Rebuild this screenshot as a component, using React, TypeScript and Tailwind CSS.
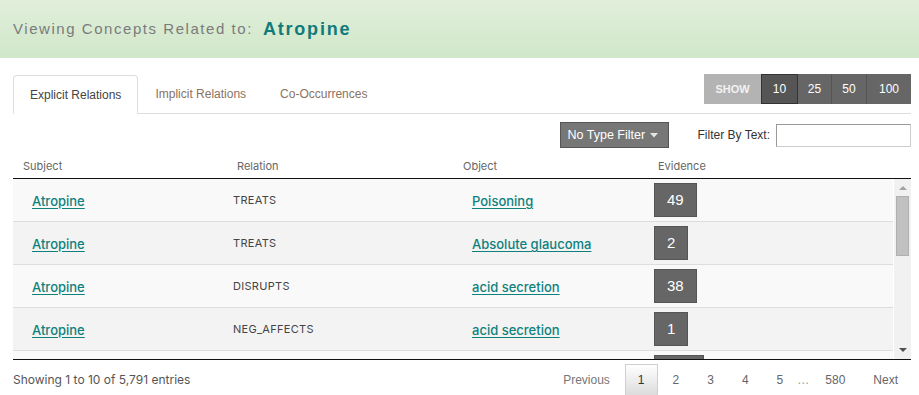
import React from 'react';

interface Relation {
  subject: string;
  relation: string;
  object: string;
  evidence: number;
}

const rows: Relation[] = [
  { subject: 'Atropine', relation: 'TREATS', object: 'Poisoning', evidence: 49 },
  { subject: 'Atropine', relation: 'TREATS', object: 'Absolute glaucoma', evidence: 2 },
  { subject: 'Atropine', relation: 'DISRUPTS', object: 'acid secretion', evidence: 38 },
  { subject: 'Atropine', relation: 'NEG_AFFECTS', object: 'acid secretion', evidence: 1 },
  { subject: 'Atropine', relation: 'INHIBITS', object: 'Acetylcholine', evidence: 112 },
  { subject: 'Atropine', relation: 'TREATS', object: 'Bradycardia', evidence: 87 },
  { subject: 'Atropine', relation: 'AFFECTS', object: 'Heart rate', evidence: 64 },
  { subject: 'Atropine', relation: 'INTERACTS_WITH', object: 'Pralidoxime', evidence: 21 },
  { subject: 'Atropine', relation: 'PREVENTS', object: 'Vomiting', evidence: 5 },
  { subject: 'Atropine', relation: 'TREATS', object: 'Myopia', evidence: 33 },
];

const sans = "font-['Liberation_Sans',Arial,sans-serif]";
const inter = "font-['Inter','Noto_Sans',sans-serif]";

const App: React.FC = () => {
  const pages = ['2', '3', '4', '5'];

  return (
    <div className={`w-[919px] h-[395px] overflow-hidden bg-white ${sans}`}>
      <div className="h-[58px] flex items-center pl-[13px] bg-gradient-to-b from-[#e1efdb] to-[#d0e7c9]">
        <span className="text-[15px] tracking-[1.55px] text-[#7b7b7b]">Viewing Concepts Related to:</span>
        <span className="ml-[10px] text-[18px] font-bold tracking-[1.8px] text-[#107b79]">Atropine</span>
      </div>

      <div className="pl-[13px] pr-[8px]">
        <div className="mt-[16px] flex items-end border-b border-[#dddddd]">
          <div className="-mb-px h-[39px] pt-px px-[16px] flex items-center border border-[#dddddd] border-b-white rounded-t-[4px] bg-white text-[12px] text-[#444]">
            Explicit Relations
          </div>
          <div className="h-[39px] pt-px px-[17px] flex items-center text-[12px] text-[#8a7263]">Implicit Relations</div>
          <div className="h-[39px] pt-px px-[17px] flex items-center text-[12px] text-[#8a7263]">Co-Occurrences</div>

          <div className="ml-auto self-start flex h-[30px] text-[12px] text-white">
            <div className="w-[57px] flex items-center justify-center bg-[#b3b3b3] text-[11px] font-bold text-[#f2f2f2]">SHOW</div>
            <div className="w-[37px] flex items-center justify-center bg-[#555] border border-[#333]">10</div>
            <div className="w-[34px] flex items-center justify-center bg-[#666] border-r border-[#555]">25</div>
            <div className="w-[35px] flex items-center justify-center bg-[#666] border-r border-[#555]">50</div>
            <div className="w-[44px] flex items-center justify-center bg-[#666]">100</div>
          </div>
        </div>

        <div className="mt-[8px] flex items-center justify-end">
          <button className="h-[26px] w-[109px] flex items-center justify-between pl-[7px] pr-[10px] bg-[#777] border border-[#555] text-[12.5px] text-white">
            No Type Filter
            <svg width="8" height="5" viewBox="0 0 8 5">
              <path d="M0 0h8L4 4.5z" fill="#e6e6e6" />
            </svg>
          </button>
          <label className="ml-[29px] text-[12px] text-[#333]">Filter By Text:</label>
          <input className="ml-[6px] w-[135px] h-[23px] border border-[#ccc] border-t-[#999] border-l-[#999] outline-none" />
        </div>

        <div className="mt-[7px] flex border-b border-[#111]">
          <div className={`w-[880px] h-[23px] grid grid-cols-[214px_226px_195px_1fr] items-center text-[11px] text-[#666] ${inter}`}>
            <div className="pl-[10px]">Subject</div>
            <div className="pl-[10px]">Relation</div>
            <div className="pl-[10px]">Object</div>
            <div className="pl-[10px]">Evidence</div>
          </div>
        </div>

        <div className={`h-[181px] flex border-b border-[#111] ${inter}`}>
          <div className="w-[880px] h-full overflow-hidden">
            {rows.map((r, i) => (
              <div
                key={i}
                className={`h-[43px] grid grid-cols-[214px_226px_195px_1fr] items-center border-b border-[#dddddd] ${
                  i % 2 === 0 ? 'bg-[#f9f9f9]' : 'bg-[#f3f3f3]'
                }`}
              >
                <div className="pl-[19px]">
                  <a className="text-[13px] font-medium text-[#0f817d] underline underline-offset-2">{r.subject}</a>
                </div>
                <div className="pl-[6px] text-[11px] text-[#444] tracking-[0.3px]">{r.relation}</div>
                <div className="pl-[19px]">
                  <a className="text-[13px] font-medium text-[#0f817d] underline underline-offset-2">{r.object}</a>
                </div>
                <div className="pl-[6px]">
                  <span className={`inline-flex h-[34px] items-center px-[12px] bg-[#666] border border-[#555] text-[15px] text-white ${sans}`}>
                    {r.evidence}
                  </span>
                </div>
              </div>
            ))}
          </div>
          <div className="ml-px flex-1 bg-[#f1f1f1] flex flex-col items-center">
            <svg className="mt-[7px]" width="8" height="4" viewBox="0 0 8 4">
              <path d="M0 4h8L4 0z" fill="#a3a3a3" />
            </svg>
            <div className="mt-[6px] w-[13px] h-[60px] bg-[#c1c1c1] border border-[#b0b0b0]" />
            <svg className="mt-auto mb-[7px]" width="8" height="4" viewBox="0 0 8 4">
              <path d="M0 0h8L4 4z" fill="#505050" />
            </svg>
          </div>
        </div>

        <div className="mt-[4px] flex items-center justify-between">
          <div className={`text-[12px] text-[#555] ${inter}`}>Showing 1 to 10 of 5,791 entries</div>
          <div className="flex items-center text-[12px] text-[#666]">
            <span className="ml-[2px] px-[12px] py-[6px] border border-transparent text-[#777]">Previous</span>
            <span className="ml-[2px] px-[12px] py-[6px] border border-[#cfcfcf] bg-gradient-to-b from-white to-[#dcdcdc] text-[#333]">1</span>
            {pages.map((p) => (
              <span key={p} className="ml-[2px] px-[12px] py-[6px] border border-transparent">{p}</span>
            ))}
            <span className="px-[1px] text-[#999]">…</span>
            <span className="ml-[2px] px-[12px] py-[6px] border border-transparent">580</span>
            <span className="ml-[2px] px-[12px] py-[6px] border border-transparent">Next</span>
          </div>
        </div>
      </div>
    </div>
  );
};

export default App;
